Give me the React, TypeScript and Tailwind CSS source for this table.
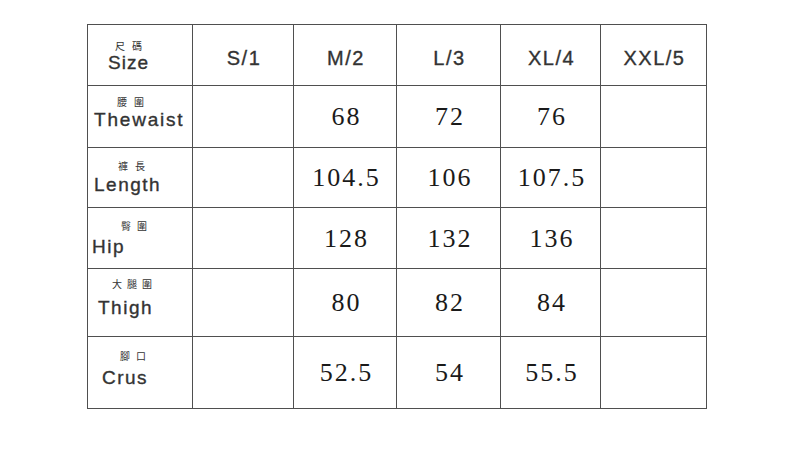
const sizes = ["S/1", "M/2", "L/3", "XL/4", "XXL/5"];

type Row = {
  zh: string;
  en: string;
  values: string[];
  rowClass: string;
  padClass: string;
  zhClass: string;
  enClass: string;
};

const rows: Row[] = [
  {
    zh: "腰圍",
    en: "Thewaist",
    values: ["", "68", "72", "76", ""],
    rowClass: "h-[62px]",
    padClass: "pt-[11px]",
    zhClass: "ml-[29px] tracking-[7px]",
    enClass: "ml-[6px] mt-[3px] tracking-[1.8px]",
  },
  {
    zh: "褲長",
    en: "Length",
    values: ["", "104.5", "106", "107.5", ""],
    rowClass: "h-[60px]",
    padClass: "pt-[13px]",
    zhClass: "ml-[30px] tracking-[7px]",
    enClass: "ml-[6px] mt-[4px] tracking-[1.5px]",
  },
  {
    zh: "臀圍",
    en: "Hip",
    values: ["", "128", "132", "136", ""],
    rowClass: "h-[61px]",
    padClass: "pt-[13px]",
    zhClass: "ml-[33px] tracking-[6px]",
    enClass: "ml-[4px] mt-[6px] tracking-[1.5px]",
  },
  {
    zh: "大腿圍",
    en: "Thigh",
    values: ["", "80", "82", "84", ""],
    rowClass: "h-[68px]",
    padClass: "pt-[10px]",
    zhClass: "ml-[24px] tracking-[5px]",
    enClass: "ml-[10px] mt-[9px] tracking-[1.5px]",
  },
  {
    zh: "腳口",
    en: "Crus",
    values: ["", "52.5", "54", "55.5", ""],
    rowClass: "h-[72px]",
    padClass: "pt-[14px]",
    zhClass: "ml-[32px] tracking-[6px]",
    enClass: "ml-[14px] mt-[7px] tracking-[1.5px]",
  },
];

const cols = "grid grid-cols-[105px_101px_103px_104px_100px_106px]";
const cell = "border-r border-b border-[#4f4f4f]";
const sans = "font-['Liberation_Sans',Arial,sans-serif] [-webkit-text-stroke:0.35px_#333]";
const zhFont = "font-['Noto_Sans_CJK_TC',sans-serif]";

const App = () => {
  return (
    <div className="h-[453px] w-[790px] bg-white pl-[87px] pt-[24px]">
      <div className="w-[620px] border-l border-t border-[#4f4f4f]">
        {/* Header */}
        <div className={`${cols} h-[61px]`}>
          <div className={`${cell} flex flex-col items-start pt-[16px]`}>
            <span className={`${zhFont} ml-[27px] text-[10px] leading-none tracking-[7px] text-[#333]`}>
              尺碼
            </span>
            <span className={`${sans} ml-[20px] mt-[2px] text-[19px] leading-none tracking-[1px] text-[#333]`}>
              Size
            </span>
          </div>
          {sizes.map((s) => (
            <div
              key={s}
              className={`${cell} ${sans} flex items-center justify-center pt-[6px] pl-[2px] text-[20px] tracking-[1.5px] text-[#333]`}
            >
              {s}
            </div>
          ))}
        </div>

        {/* Measurements */}
        {rows.map((r) => (
          <div key={r.en} className={`${cols} ${r.rowClass}`}>
            <div className={`${cell} flex flex-col items-start ${r.padClass}`}>
              <span className={`${zhFont} ${r.zhClass} text-[10px] leading-none text-[#333]`}>
                {r.zh}
              </span>
              <span className={`${sans} ${r.enClass} text-[19px] leading-none text-[#333]`}>
                {r.en}
              </span>
            </div>
            {r.values.map((v, i) => (
              <div
                key={i}
                className={`${cell} flex items-center justify-center pl-[3px] font-['Liberation_Serif',serif] text-[26px] tracking-[2px] text-[#1a1a1a]`}
              >
                {v}
              </div>
            ))}
          </div>
        ))}
      </div>
    </div>
  );
};

export default App;
